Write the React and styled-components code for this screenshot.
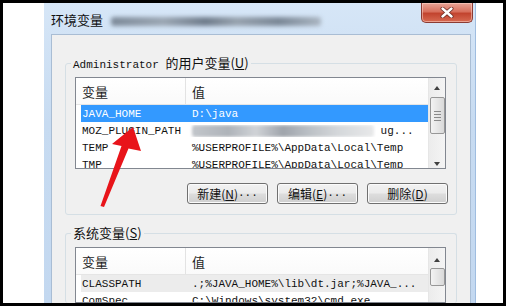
import React from 'react';
import styled, { createGlobalStyle } from 'styled-components';

const GlobalStyle = createGlobalStyle`
  html, body {
    margin: 0;
    padding: 0;
    background: #fff;
  }
  body {
    font-family: "Noto Sans CJK SC", "Noto Sans", sans-serif;
  }
`;

const CJK = '"Noto Sans CJK SC", "Noto Sans", sans-serif';
const MONO = '"Liberation Mono", "Noto Sans CJK SC", monospace';

// Screenshot frame
const Frame = styled.div`
  position: relative;
  width: 506px;
  height: 306px;
  box-sizing: border-box;
  border: 3px solid #000;
  background: #fff;
  display: flex;
  overflow: hidden;
`;

const SideGap = styled.div`
  flex: none;
  width: ${(p) => p.$w}px;
  background: #fff;
`;

// Window
const Window = styled.div`
  flex: none;
  width: 432px;
  height: 300px;
  box-sizing: border-box;
  display: flex;
  flex-direction: column;
  background: linear-gradient(180deg, #d6e6f7 0%, #c7dbf1 40%, #c3d8f0 100%);
  border-right: 1px solid #9fbde0;
`;

const TitleBar = styled.div`
  flex: none;
  height: 31px;
  display: flex;
  align-items: flex-start;
  padding-left: 7px;
`;

const Title = styled.span`
  margin-top: 8px;
  font-family: ${CJK};
  font-size: 13px;
  line-height: 17px;
  color: #111;
`;

const Blurred = styled.span`
  display: inline-block;
  width: ${(p) => p.$w}px;
  height: ${(p) => p.$h}px;
  margin: ${(p) => p.$m || '0'};
  background: ${(p) => p.$bg};
  filter: blur(${(p) => p.$blur || 1.5}px);
  border-radius: 3px;
`;

const CloseButton = styled.div`
  margin-left: auto;
  margin-right: 2px;
  width: 52px;
  height: 20px;
  box-sizing: border-box;
  border: 1px solid #8b3b33;
  border-top: none;
  border-radius: 0 0 5px 5px;
  background: linear-gradient(180deg, #e9a597 0%, #d8705d 45%, #c2442f 55%, #d76a52 100%);
  display: flex;
  align-items: center;
  justify-content: center;
  box-shadow: inset 0 0 0 1px rgba(255, 220, 210, 0.5);
`;

const Panel = styled.div`
  flex: 1;
  margin: 0 4px 0 7px;
  box-sizing: border-box;
  background: #f0f0f0;
  border: 1px solid #a9bdd4;
  border-bottom: none;
  padding: 20px 13px 0 13px;
  display: flex;
  flex-direction: column;
  min-height: 0;
`;

const Group = styled.fieldset`
  margin: ${(p) => (p.$second ? '10px 0 0 0' : '0')};
  border: 1px solid #d5dfe5;
  border-radius: 3px;
  padding: 6px 10px ${(p) => (p.$second ? '0' : '10px')} 9px;
  display: flex;
  flex-direction: column;
  min-width: 0;
  ${(p) => (p.$second ? 'flex: 1; min-height: 0; border-bottom: none;' : '')}
`;

const Legend = styled.legend`
  margin-left: -4px;
  padding: 0 2px;
  height: 16px;
  font-family: ${CJK};
  font-size: 13px;
  line-height: 16px;
  color: #111;
  white-space: nowrap;
`;

const Mono = styled.span`
  font-family: ${MONO};
  font-size: 11px;
  line-height: 1;
`;

const Key = styled.span`
  text-decoration: underline;
  text-underline-offset: 1px;
`;

// List view
const ListView = styled.div`
  ${(p) => (p.$fill ? 'flex: 1; min-height: 0;' : `height: ${p.$h}px; flex: none;`)}
  box-sizing: border-box;
  border: 1px solid #828790;
  background: #fff;
  display: grid;
  grid-template-columns: 1fr 17px;
  overflow: hidden;
`;

const ListBody = styled.div`
  display: flex;
  flex-direction: column;
  min-width: 0;
`;

const Header = styled.div`
  flex: none;
  height: 26px;
  display: grid;
  grid-template-columns: 110px 1fr;
  border-bottom: 1px solid #e5e5e5;
  background: linear-gradient(180deg, #fff 0%, #fafafa 100%);
`;

const HeaderCell = styled.div`
  display: flex;
  align-items: center;
  padding-left: 6px;
  font-family: ${CJK};
  font-size: 13px;
  color: #1e1e1e;
  border-right: ${(p) => (p.$divider ? '1px solid #e3e3e3' : 'none')};
`;

const Row = styled.div`
  flex: none;
  height: 17px;
  margin-left: 5px;
  display: grid;
  grid-template-columns: 105px 1fr;
  align-items: center;
  font-family: ${MONO};
  font-size: 11px;
  white-space: nowrap;
  overflow: hidden;
  color: ${(p) => (p.$sel === 'active' ? '#fff' : '#111')};
  background: ${(p) =>
    p.$sel === 'active' ? '#3399ff' : p.$sel === 'inactive' ? '#ececec' : 'transparent'};
`;

const Cell = styled.div`
  padding-left: ${(p) => (p.$value ? 6 : 1)}px;
  overflow: hidden;
  display: flex;
  align-items: center;
`;

const ScrollBar = styled.div`
  background: linear-gradient(90deg, #ececec, #f4f4f4);
  border-left: 1px solid #e6e6e6;
  display: flex;
  flex-direction: column;
  align-items: center;
`;

const Arrow = styled.div`
  flex: none;
  width: 0;
  height: 0;
  border-left: 3.5px solid transparent;
  border-right: 3.5px solid transparent;
  ${(p) =>
    p.$down
      ? 'border-top: 4px solid #404040; margin-top: auto; margin-bottom: 7px;'
      : `border-bottom: 4px solid #404040; margin-top: ${p.$top}px;`}
`;

const Thumb = styled.div`
  flex: none;
  margin-top: ${(p) => p.$gap}px;
  width: 15px;
  height: ${(p) => p.$h}px;
  box-sizing: border-box;
  border: 1px solid #979797;
  border-radius: 2px;
  background: linear-gradient(90deg, #f3f3f3 0%, #e6e6e6 50%, #d9d9d9 100%);
  display: flex;
  flex-direction: column;
  align-items: center;
  justify-content: center;
  gap: 2px;
`;

const Grip = styled.span`
  width: 7px;
  height: 1px;
  background: #8a8a8a;
`;

const ButtonRow = styled.div`
  margin-top: 14px;
  margin-right: -2px;
  display: flex;
  justify-content: flex-end;
  gap: 9px;
`;

const Button = styled.div`
  width: 81px;
  height: 21px;
  box-sizing: border-box;
  border: 1px solid #707070;
  border-radius: 3px;
  background: linear-gradient(180deg, #f2f2f2 0%, #ebebeb 48%, #dddddd 52%, #cfcfcf 100%);
  box-shadow: inset 0 0 0 1px #fbfbfb;
  display: flex;
  align-items: center;
  justify-content: center;
  font-family: ${CJK};
  font-size: 12px;
  line-height: 16px;
  color: #111;
  white-space: nowrap;
`;

const Overlay = styled.svg`
  position: absolute;
  left: -3px;
  top: -3px;
  pointer-events: none;
`;

const userRows = [
  { name: 'JAVA_HOME', value: 'D:\\java', sel: 'active' },
  { name: 'MOZ_PLUGIN_PATH', blur: true },
  { name: 'TEMP', value: '%USERPROFILE%\\AppData\\Local\\Temp' },
  { name: 'TMP', value: '%USERPROFILE%\\AppData\\Local\\Temp' },
];

const sysRows = [
  { name: 'CLASSPATH', value: '.;%JAVA_HOME%\\lib\\dt.jar;%JAVA_...', sel: 'inactive' },
  { name: 'ComSpec', value: 'C:\\Windows\\system32\\cmd.exe' },
];

const VarList = ({ rows, height, fill, arrowTop, thumbGap, thumbH }) => (
  <ListView $h={height} $fill={fill}>
    <ListBody>
      <Header>
        <HeaderCell $divider>变量</HeaderCell>
        <HeaderCell>值</HeaderCell>
      </Header>
      {rows.map((r) => (
        <Row key={r.name} $sel={r.sel}>
          <Cell>{r.name}</Cell>
          <Cell $value>
            {r.blur ? (
              <>
                <Blurred
                  $w={182}
                  $h={12}
                  $blur={1.6}
                  $bg="linear-gradient(90deg, #c2c6cb 0%, #aeb3b9 20%, #d0d3d7 35%, #9fa4ab 50%, #bcc1c6 65%, #d4d7da 80%, #e8e9ea 100%)"
                />
                <span>&nbsp;ug...</span>
              </>
            ) : (
              r.value
            )}
          </Cell>
        </Row>
      ))}
    </ListBody>
    <ScrollBar>
      <Arrow $top={arrowTop} />
      <Thumb $gap={thumbGap} $h={thumbH}>
        {thumbH > 30 && (
          <>
            <Grip />
            <Grip />
            <Grip />
            <Grip />
          </>
        )}
      </Thumb>
      {!fill && <Arrow $down />}
    </ScrollBar>
  </ListView>
);

const App = () => (
  <>
    <GlobalStyle />
    <Frame>
      <SideGap $w={41} />
      <Window>
        <TitleBar>
          <Title>环境变量</Title>
          <Blurred
            $w={210}
            $h={9}
            $m="14px 0 0 8px"
            $blur={2}
            $bg="linear-gradient(90deg, #7d8a99 0%, #9ba6b3 25%, #6f7c8b 45%, #97a2ae 60%, #7a8796 80%, #aab5c1 100%)"
          />
          <CloseButton>
            <svg width="14" height="11" viewBox="0 0 14 11">
              <path d="M2.5 1.5 L11.5 9.5 M11.5 1.5 L2.5 9.5" stroke="#6b2a22" strokeWidth="4" strokeLinecap="round" />
              <path d="M2.5 1.5 L11.5 9.5 M11.5 1.5 L2.5 9.5" stroke="#fff" strokeWidth="2.4" strokeLinecap="round" />
            </svg>
          </CloseButton>
        </TitleBar>
        <Panel>
          <Group>
            <Legend>
              <Mono>Administrator </Mono>的用户变量(<Key>U</Key>)
            </Legend>
            <VarList rows={userRows} height={92} arrowTop={8} thumbGap={7} thumbH={37} />
            <ButtonRow>
              <Button>
                新建(<Key>N</Key>)<Mono>...</Mono>
              </Button>
              <Button>
                编辑(<Key>E</Key>)<Mono>...</Mono>
              </Button>
              <Button>
                删除(<Key>D</Key>)
              </Button>
            </ButtonRow>
          </Group>
          <Group $second>
            <Legend>
              系统变量(<Key>S</Key>)
            </Legend>
            <VarList rows={sysRows} fill arrowTop={10} thumbGap={6} thumbH={18} />
          </Group>
        </Panel>
      </Window>
      <SideGap $w={27} />
      <Overlay width="506" height="306" viewBox="0 0 506 306">
        <polygon
          points="133,127 141,151 128.5,148.5 104,207 100.5,206 121.5,146 112,144"
          fill="#e8141a"
        />
      </Overlay>
    </Frame>
  </>
);

export default App;
